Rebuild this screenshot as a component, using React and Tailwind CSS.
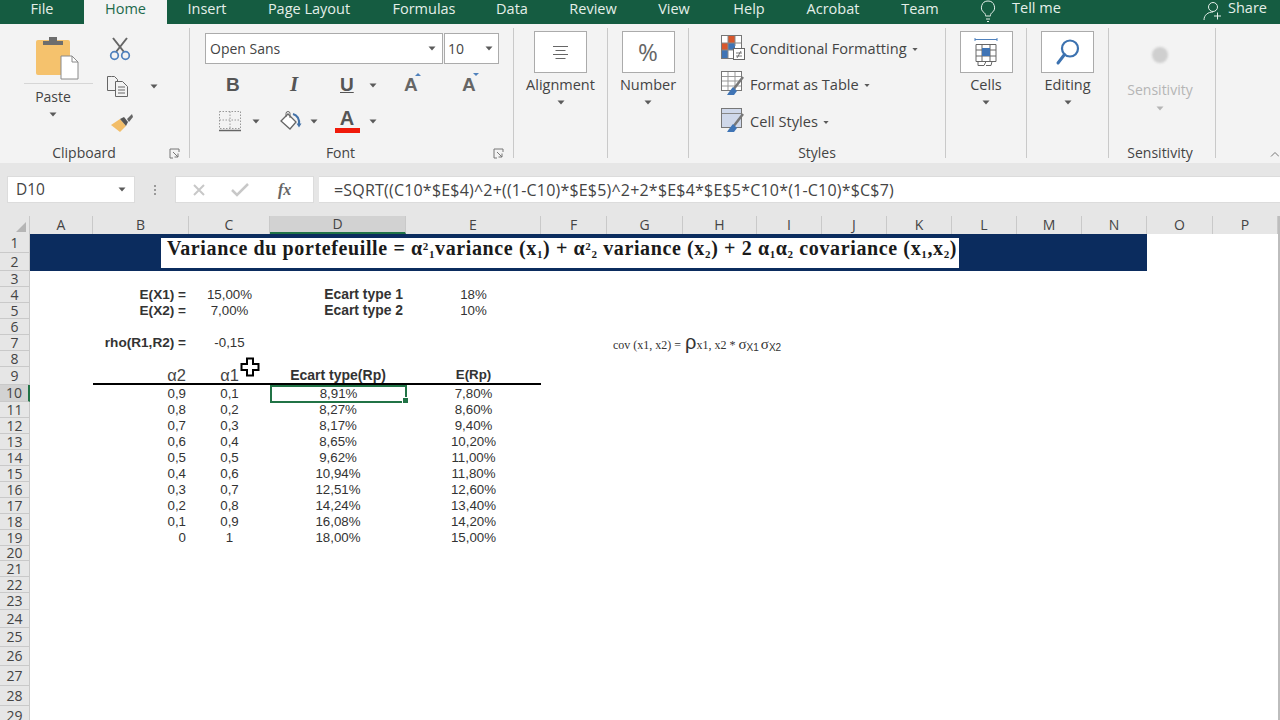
import React from "react";

const tabs = [
  ["File", "w-[84px]"],
  ["Home", "w-[83px]"],
  ["Insert", "w-[80px]"],
  ["Page Layout", "w-[124px]"],
  ["Formulas", "w-[106px]"],
  ["Data", "w-[70px]"],
  ["Review", "w-[92px]"],
  ["View", "w-[70px]"],
  ["Help", "w-[80px]"],
  ["Acrobat", "w-[88px]"],
  ["Team", "w-[86px]"],
];

const columns = [
  ["A", "w-[63px]"],
  ["B", "w-[96px]"],
  ["C", "w-[81px]"],
  ["D", "w-[136px]"],
  ["E", "w-[135px]"],
  ["F", "w-[66px]"],
  ["G", "w-[76px]"],
  ["H", "w-[74px]"],
  ["I", "w-[65px]"],
  ["J", "w-[65px]"],
  ["K", "w-[65px]"],
  ["L", "w-[65px]"],
  ["M", "w-[65px]"],
  ["N", "w-[65px]"],
  ["O", "w-[66px]"],
  ["P", "w-[65px]"],
];

const table = [
  ["0,9", "0,1", "8,91%", "7,80%"],
  ["0,8", "0,2", "8,27%", "8,60%"],
  ["0,7", "0,3", "8,17%", "9,40%"],
  ["0,6", "0,4", "8,65%", "10,20%"],
  ["0,5", "0,5", "9,62%", "11,00%"],
  ["0,4", "0,6", "10,94%", "11,80%"],
  ["0,3", "0,7", "12,51%", "12,60%"],
  ["0,2", "0,8", "14,24%", "13,40%"],
  ["0,1", "0,9", "16,08%", "14,20%"],
  ["0", "1", "18,00%", "15,00%"],
];

const Caret = ({ className = "" }) => (
  <svg width="8" height="5" viewBox="0 0 8 5" className={className}>
    <path d="M0.5 0.5h7L4 4.5z" fill="#5a5a5a" />
  </svg>
);

const Sep = () => <div className="w-px h-[130px] mt-[4px] bg-[#c9c9c9] shrink-0" />;

const Launcher = ({ className = "" }) => (
  <svg width="11" height="11" viewBox="0 0 11 11" className={className} fill="none" stroke="#777">
    <path d="M10 4V1H1v9h3" />
    <path d="M4 4l5 5M9 5.5V9H5.5" />
  </svg>
);

const GroupLabel = ({ children, launcher, pad = "" }) => (
  <div className={"relative h-[18px] mb-[1px] text-[14px] leading-[18px] text-center text-[#444] " + pad}>
    {children}
    {launcher && <Launcher className="absolute right-[9px] top-[4px]" />}
  </div>
);

const BigButton = ({ label, children }) => (
  <div className="flex-1 flex flex-col items-center">
    <div className="mt-[7px] w-[53px] h-[42px] bg-white border border-[#ababab] flex items-center justify-center">
      {children}
    </div>
    <div className="mt-[2px] text-[14.500px] leading-[20px] text-[#444]">{label}</div>
    <Caret className="mt-[5px]" />
  </div>
);

const PasteIcon = () => (
  <svg width="46" height="44" viewBox="0 0 46 44">
    <rect x="1" y="4" width="34" height="35" rx="2" fill="#f5c26d" />
    <path d="M8 9V5h6V1h8v4h6v4z" fill="#6d6d6d" />
    <path d="M26 20h11l6 6v17H26z" fill="#fff" stroke="#8a8a8a" />
    <path d="M37 20v6h6" fill="none" stroke="#8a8a8a" />
  </svg>
);

const ScissorsIcon = () => (
  <svg width="22" height="24" viewBox="0 0 22 24" fill="none">
    <path d="M4 1l11 14M18 1L7 15" stroke="#666" strokeWidth="2" />
    <circle cx="5.5" cy="18.5" r="3.8" stroke="#4f81bd" strokeWidth="1.7" />
    <circle cx="16.5" cy="18.5" r="3.8" stroke="#4f81bd" strokeWidth="1.7" />
  </svg>
);

const CopyIcon = () => (
  <svg width="23" height="22" viewBox="0 0 23 22" fill="none" stroke="#666">
    <path d="M9 15.5H1.5v-14h4M5.5 1.500h3l3 3v2" />
    <path d="M9.500 6.500h7l5 5v10h-12z" fill="#f3f3f3" />
    <path d="M12 12h7M12 15h7M12 18h7" />
  </svg>
);

const BrushIcon = () => (
  <svg width="24" height="20" viewBox="0 0 24 20">
    <path d="M1 12l9-6 6 7-6 6z" fill="#f2bd68" />
    <path d="M10 6l4-2 4 5-2 4z" fill="#555" />
    <path d="M17 6l5-5 1 3-4 5z" fill="#666" />
  </svg>
);

const BordersIcon = () => (
  <svg width="24" height="22" viewBox="0 0 24 22" fill="none">
    <path d="M1.500 1.500h21v17h-21zM12 1.500v17M1.500 10h21" stroke="#999" strokeDasharray="1.500 1.500" />
    <path d="M1 20.500h22" stroke="#666" strokeWidth="1.500" />
  </svg>
);

const FillIcon = () => (
  <svg width="23" height="20" viewBox="0 0 23 20" fill="none">
    <path d="M9 3l8 8-6 7-9-8z" fill="#fff" stroke="#666" strokeWidth="1.300" />
    <path d="M7 6V2.500a2 2 0 0 1 4 0V7" stroke="#666" />
    <path d="M14 3c4 1 7 5 6 11" stroke="#4472a8" strokeWidth="2" />
    <path d="M17.500 12.500h5l-2.500 4z" fill="#4472a8" />
  </svg>
);

const AlignIcon = () => (
  <svg width="17" height="15" viewBox="0 0 17 15" stroke="#666">
    <path d="M1 1.500h15M3.500 5.500h10M1 9.500h15M3.500 13.500h10" />
  </svg>
);

const CellsIcon = () => (
  <svg width="24" height="32" viewBox="0 0 24 32" fill="none" stroke="#666">
    <path d="M1 2v3M23 2v3M1 3.500h22" stroke="#4f81bd" />
    <path d="M2 8.500h20v17H2zM2 14h20M2 20h20M8 8.500v17M16 8.500v17" />
    <rect x="8" y="12" width="8" height="8" fill="#3f74b5" stroke="none" />
    <path d="M4 25.500v4h6l2-4M12 29.500h5l1-4" />
  </svg>
);

const SearchIcon = () => (
  <svg width="26" height="28" viewBox="0 0 26 28" fill="none" stroke="#3c72b0">
    <circle cx="15" cy="10.500" r="8" strokeWidth="2.200" />
    <path d="M9.500 16.500L3 25" strokeWidth="3" strokeLinecap="round" />
  </svg>
);

const CondIcon = () => (
  <svg width="24" height="30" viewBox="0 0 24 30" fill="none">
    <rect x="0.500" y="1.500" width="20" height="23" fill="#fff" stroke="#777" />
    <rect x="7" y="2" width="7" height="7" fill="#d9572b" />
    <rect x="1" y="9" width="6" height="7" fill="#d9572b" />
    <rect x="7" y="9" width="7" height="7" fill="#3f74b5" />
    <rect x="1" y="16" width="6" height="8" fill="#3f74b5" />
    <path d="M7 2v22M14 2v10M1 9h19M1 16h12" stroke="#888" />
    <rect x="12.500" y="14.500" width="11" height="11" fill="#fff" stroke="#666" />
    <path d="M15 19h6M15 22h6M16 24l4-7" stroke="#555" strokeWidth="0.800" />
  </svg>
);

const TableIcon = ({ shaded }) => (
  <svg width="24" height="30" viewBox="0 0 24 30" fill="none">
    <rect x="0.500" y="1.500" width="20" height="19" fill={shaded ? "#cfd8ea" : "#fff"} stroke="#777" />
    {shaded ? (
      <path d="M1 6.500h19" stroke="#888" />
    ) : (
      <path d="M1 6.500h19M1 11h19M1 16h19M7 2v18M14 2v18" stroke="#999" />
    )}
    <path d="M22 7L12 20" stroke="#777" strokeWidth="2.500" />
    <path d="M8 22l4-5 4 4-3 4H6z" fill="#3f74b5" />
  </svg>
);

const CrossCursor = () => (
  <svg width="20" height="20" viewBox="0 0 20 20">
    <path d="M7 1.500h6v5.500h5.500v6H13v5.500H7V13H1.500V7H7z" fill="#fff" stroke="#000" strokeWidth="2" />
  </svg>
);

function Ribbon() {
  return (
    <div className="flex h-[139px] bg-[#f3f3f3] text-[#444] shrink-0">
      <div className="w-[189px] flex flex-col shrink-0">
        <div className="flex-1 flex">
          <div className="w-[106px] pl-[24px] flex flex-col">
            <div className="w-[58px] h-[47px] pl-[11px] pt-[12px] border-b border-[#d6d6d6] box-content">
              <PasteIcon />
            </div>
            <div className="w-[58px] text-center text-[14px] leading-[20px] mt-[3px]">Paste</div>
            <Caret className="ml-[25px] mt-[5px]" />
          </div>
          <div className="flex flex-col pt-[13px]">
            <div className="ml-[3px]"><ScissorsIcon /></div>
            <div className="flex items-center mt-[14px] w-[52px]">
              <CopyIcon />
              <Caret className="ml-[21px]" />
            </div>
            <div className="mt-[16px] ml-[4px]">
              <BrushIcon />
            </div>
          </div>
        </div>
        <GroupLabel launcher pad="pr-[21px]">Clipboard</GroupLabel>
      </div>
      <Sep />
      <div className="w-[323px] flex flex-col shrink-0">
        <div className="flex-1 pl-[15px] pt-[9px]">
          <div className="flex h-[31px]">
            <div className="w-[238px] bg-white border border-[#ababab] flex items-center justify-between pl-[4px] pr-[6px] text-[14px]">
              Open Sans
              <Caret />
            </div>
            <div className="w-[55px] ml-px bg-white border border-[#ababab] flex items-center justify-between pl-[3px] pr-[5px] text-[14px]">
              10
              <Caret />
            </div>
          </div>
          <div className="flex items-center h-[36px] mt-[3px] text-[#555]">
            <span className="ml-[21px] w-[24px] text-[19px] font-bold font-['Liberation_Sans',sans-serif]">B</span>
            <span className="ml-[40px] w-[24px] text-[21px] font-bold italic font-['Liberation_Serif',serif]">I</span>
            <span className="ml-[26px] w-[22px] text-[19px] font-bold font-['Liberation_Sans',sans-serif] underline">U</span>
            <Caret className="ml-[7px]" />
            <span className="ml-[27px] w-[20px] text-[19px] font-bold font-['Liberation_Sans',sans-serif] relative text-[#666]">
              A
              <span className="absolute left-[11px] top-[2px] w-0 h-0 border-x-[3px] border-x-transparent border-b-[3px] border-b-[#4f81bd]" />
            </span>
            <span className="ml-[38px] w-[20px] text-[19px] font-bold font-['Liberation_Sans',sans-serif] relative text-[#666]">
              A
              <span className="absolute left-[11px] top-[2px] w-0 h-0 border-x-[3px] border-x-transparent border-t-[3px] border-t-[#4f81bd]" />
            </span>
          </div>
          <div className="flex items-center h-[32px] mt-[2px]">
            <div className="ml-[13px]"><BordersIcon /></div>
            <Caret className="ml-[10px]" />
            <div className="ml-[19px]"><FillIcon /></div>
            <Caret className="ml-[8px]" />
            <div className="ml-[16px] w-[26px] flex flex-col items-center">
              <span className="text-[20px] leading-[18px] font-bold font-['Liberation_Sans',sans-serif] text-[#555]">A</span>
              <span className="w-[25px] h-[5px] bg-[#f01a0a] mt-[1px]" />
            </div>
            <Caret className="ml-[9px]" />
          </div>
        </div>
        <GroupLabel launcher pad="pr-[22px]">Font</GroupLabel>
      </div>
      <Sep />
      <div className="w-[93px] flex flex-col shrink-0">
        <BigButton label="Alignment"><AlignIcon /></BigButton>
      </div>
      <Sep />
      <div className="w-[80px] flex flex-col shrink-0">
        <BigButton label="Number"><span className="text-[24px] leading-none text-[#666]">%</span></BigButton>
      </div>
      <Sep />
      <div className="w-[256px] flex flex-col shrink-0">
        <div className="flex-1 pl-[32px] pt-[10px] text-[14.600px]">
          <div className="flex items-center h-[30px] gap-[5px]">
            <CondIcon />
            <span>Conditional Formatting</span>
            <Caret className="scale-75 -ml-[1px]" />
          </div>
          <div className="flex items-center h-[30px] mt-[6px] gap-[5px]">
            <TableIcon />
            <span>Format as Table</span>
            <Caret className="scale-75 -ml-[1px]" />
          </div>
          <div className="flex items-center h-[30px] mt-[7px] gap-[5px]">
            <TableIcon shaded />
            <span>Cell Styles</span>
            <Caret className="scale-75 -ml-[1px]" />
          </div>
        </div>
        <GroupLabel>Styles</GroupLabel>
      </div>
      <Sep />
      <div className="w-[80px] flex flex-col shrink-0">
        <BigButton label="Cells"><CellsIcon /></BigButton>
      </div>
      <Sep />
      <div className="w-[81px] flex flex-col shrink-0">
        <BigButton label="Editing"><SearchIcon /></BigButton>
      </div>
      <Sep />
      <div className="w-[106px] flex flex-col shrink-0">
        <div className="flex-1 flex flex-col items-center pr-[4px]">
          <div className="mt-[23px] w-[16px] h-[16px] rounded-full bg-[#cfcfcf] blur-[1px]" />
          <div className="mt-[17px] text-[14px] leading-[20px] text-[#b5b5b5]">Sensitivity</div>
          <Caret className="mt-[6px] opacity-40" />
        </div>
        <GroupLabel pad="pr-[4px]">Sensitivity</GroupLabel>
      </div>
      <Sep />
      <div className="flex-1 flex items-end justify-end pb-[6px] pr-[1px]">
        <svg width="9" height="6" viewBox="0 0 9 6" fill="none" stroke="#777">
          <path d="M1 5.500L5 1.500l4 4" />
        </svg>
      </div>
    </div>
  );
}

function FormulaBar() {
  return (
    <div className="h-[53px] bg-[#e6e6e6] shrink-0 flex pt-[13px] text-[#444]">
      <div className="ml-[7px] w-[128px] h-[27px] bg-white flex items-center justify-between pl-[8px] pr-[8px] border border-[#dcdcdc] text-[15.500px]">
        D10
        <Caret />
      </div>
      <div className="w-[40px] h-[27px] flex flex-col items-center justify-center gap-[2px]">
        <span className="w-[2px] h-[2px] bg-[#999]" />
        <span className="w-[2px] h-[2px] bg-[#999]" />
        <span className="w-[2px] h-[2px] bg-[#999]" />
      </div>
      <div className="w-[139px] h-[27px] bg-white border border-[#dcdcdc] flex items-center">
        <svg width="14" height="12" viewBox="0 0 14 12" className="ml-[16px]" stroke="#c8c8c8" strokeWidth="2">
          <path d="M2 1l10 10M12 1L2 11" />
        </svg>
        <svg width="18" height="14" viewBox="0 0 18 14" className="ml-[25px]" fill="none" stroke="#c8c8c8" strokeWidth="2.500">
          <path d="M1 7l5 5L17 1" />
        </svg>
        <span className="ml-[29px] text-[16px] italic font-bold font-['Liberation_Serif',serif] text-[#666]">fx</span>
      </div>
      <div className="ml-[5px] flex-1 h-[27px] bg-white border-y border-[#dcdcdc] flex items-center pl-[15px] whitespace-nowrap text-[16px] tracking-[0.2px]">
        =SQRT((C10*$E$4)^2+((1-C10)*$E$5)^2+2*$E$4*$E$5*C10*(1-C10)*$C$7)
      </div>
    </div>
  );
}

const RowHead = ({ n, active }) => (
  <div
    className={
      "w-[30px] shrink-0 flex items-center justify-center border-b border-[#c9c9c9] font-['Open_Sans',sans-serif] text-[14px] text-[#444] " +
      (active ? "bg-[#d2d2d2] border-r-2 border-r-[#217346]" : "bg-[#e6e6e6] border-r border-r-[#c9c9c9]")
    }
  >
    {n}
  </div>
);

const Row = ({ n, h, active, b, c, d, e, rule, big, bold, side }) => (
  <div className={"flex " + h}>
    <RowHead n={n} active={active} />
    <div className="w-[63px] shrink-0" />
    <div className={"w-[96px] shrink-0 flex items-center justify-end pr-[3px] whitespace-nowrap " + (rule ? "border-b-2 border-black " : "") + (big ? "text-[16.500px] text-[#444] " : "") + (bold ? "font-bold text-[13.600px]" : "")}>{b}</div>
    <div className={"w-[81px] shrink-0 flex items-center justify-center " + (rule ? "border-b-2 border-black " : "") + (big ? "text-[16.500px] text-[#444]" : "")}>{c}</div>
    <div className={"w-[136px] shrink-0 flex items-center whitespace-nowrap " + (side ? "justify-end pr-[3px] font-bold text-[13.900px] " : "justify-center ") + (rule ? "border-b-2 border-black font-bold text-[14px] " : "") + (active ? "relative border-2 border-[#217346] h-[18px] w-[137px] -mr-px z-10" : "")}>
      {d}
      {active && <span className="absolute -right-[4px] -bottom-[3px] w-[7px] h-[7px] bg-[#217346] border border-white" />}
    </div>
    <div className={"w-[135px] shrink-0 flex items-center justify-center " + (rule ? "border-b-2 border-black font-bold" : "")}>{e}</div>
  </div>
);

const tailRows = [
  [20, "h-[15px]"],
  [21, "h-[16px]"],
  [22, "h-[16px]"],
  [23, "h-[17px]"],
  [24, "h-[18px]"],
  [25, "h-[19px]"],
  [26, "h-[19px]"],
  [27, "h-[20px]"],
  [28, "h-[20px]"],
  [29, "h-[20px]"],
];

const subCls = "text-[11px] font-bold";

function Sheet() {
  return (
    <div className="relative flex-1 bg-white overflow-hidden border-r-2 border-r-[#bdbdbd] font-['Liberation_Sans',sans-serif] text-[13.300px] leading-none text-[#333]">
      <div className="flex h-[18px] bg-[#e6e6e6] font-['Open_Sans',sans-serif] text-[14px] text-[#444]">
        <div className="w-[30px] shrink-0 relative border-r border-[#c9c9c9]">
          <span className="absolute right-[3px] bottom-[2px] w-0 h-0 border-l-[10px] border-l-transparent border-b-[10px] border-b-[#b5b5b5]" />
        </div>
        {columns.map(([l, w]) => (
          <div
            key={l}
            className={w + " shrink-0 flex items-center justify-center border-r border-[#c9c9c9] " + (l === "D" ? "bg-[#d2d2d2] border-b-2 border-b-[#217346]" : "")}
          >
            {l}
          </div>
        ))}
      </div>

      <div className="flex h-[37px]">
        <div className="w-[30px] shrink-0 flex flex-col bg-[#e6e6e6]">
          <div className="h-[19px] flex items-center justify-center border-b border-r border-[#c9c9c9] font-['Open_Sans',sans-serif] text-[14px] text-[#444]">1</div>
          <div className="h-[18px] flex items-center justify-center border-b border-r border-[#c9c9c9] font-['Open_Sans',sans-serif] text-[14px] text-[#444]">2</div>
        </div>
        <div className="w-[1117px] shrink-0 bg-[#0b2c5e] pl-[131px] pt-[4px]">
          <div className="w-[798px] h-[30px] bg-white pl-[6px] font-['Liberation_Serif',serif] font-bold text-[20px] leading-[20px] text-[#1a1a1a] whitespace-nowrap tracking-[0.62px]">
            Variance du portefeuille = α<sup className={subCls}>2</sup><sub className={subCls}>1</sub>variance (x<sub className={subCls}>1</sub>) + α<sup className={subCls}>2</sup><sub className={subCls}>2</sub> variance (x<sub className={subCls}>2</sub>) + 2 α<sub className={subCls}>1</sub>α<sub className={subCls}>2</sub> covariance (x<sub className={subCls}>1</sub>,x<sub className={subCls}>2</sub>)
          </div>
        </div>
      </div>

      <Row n={3} h="h-[16px]" />
      <Row n={4} h="h-[16px]" bold side b="E(X1) =" c="15,00%" d="Ecart type 1" e="18%" />
      <Row n={5} h="h-[16px]" bold side b="E(X2) =" c="7,00%" d="Ecart type 2" e="10%" />
      <Row n={6} h="h-[16px]" />
      <Row n={7} h="h-[16px]" bold b="rho(R1,R2) =" c="-0,15" />
      <Row n={8} h="h-[16px]" />
      <Row n={9} h="h-[18px]" rule big b="α2" c="α1" d="Ecart type(Rp)" e="E(Rp)" />
      {table.map((r, i) => (
        <Row key={i} n={i + 10} h={i === 0 ? "h-[17px]" : "h-[16px]"} active={i === 0} b={r[0]} c={r[1]} d={r[2]} e={r[3]} />
      ))}
      {tailRows.map(([n, h]) => (
        <Row key={n} n={n} h={h} />
      ))}

      <div className="absolute left-[613px] top-[116px] flex items-baseline whitespace-nowrap font-['Liberation_Serif',serif] text-[12px] leading-[20px] text-[#333]">
        cov (x1, x2) =<span className="ml-[4px] text-[20px] font-['Liberation_Sans',sans-serif]">ρ</span>
        <span className="text-[12px]">x1, x2</span>
        <span className="ml-[3px]">*</span>
        <span className="ml-[3px] text-[15px]">σ</span>
        <span className="text-[10px] translate-y-[2px] font-['Liberation_Sans',sans-serif]">X1</span>
        <span className="ml-[2px] text-[15px]">σ</span>
        <span className="text-[10px] translate-y-[2px] font-['Liberation_Sans',sans-serif]">X2</span>
      </div>

      <div className="absolute left-[240px] top-[141px]">
        <CrossCursor />
      </div>
    </div>
  );
}

export default function App() {
  return (
    <div className="w-[1280px] h-[720px] overflow-hidden flex flex-col font-['Open_Sans',sans-serif]">
      <div className="h-[24px] bg-[#155c41] flex text-[14.500px] leading-[15px] text-white shrink-0">
        {tabs.map(([t, w]) => (
          <div
            key={t}
            className={w + " h-[24px] pb-[8px] flex items-center justify-center " + (t === "Home" ? "bg-[#f3f3f3] text-[#1d6a4c]" : "text-[#e4efe9]")}
          >
            {t}
          </div>
        ))}
        <svg width="18" height="22" viewBox="0 0 18 22" className="ml-[16px]" fill="none" stroke="#e4efe9">
          <path d="M9 1a6.500 6.500 0 0 0-3.500 12c1 1 1 2 1 3h5c0-1 0-2 1-3A6.500 6.500 0 0 0 9 1zM7 19h4M8 21.500h2" />
        </svg>
        <div className="ml-[15px] h-[24px] pb-[9px] flex items-center text-[#e4efe9]">Tell me</div>
        <div className="flex-1" />
        <svg width="20" height="20" viewBox="0 0 20 20" className="mt-[1px]" fill="none" stroke="#e4efe9">
          <circle cx="10" cy="6" r="4.500" />
          <path d="M1 19c0-5 4-8 9-8M11 15h7M14.500 11.500v7" />
        </svg>
        <div className="ml-[5px] mr-[13px] h-[24px] pb-[9px] flex items-center text-[#e4efe9]">Share</div>
      </div>
      <Ribbon />
      <FormulaBar />
      <Sheet />
    </div>
  );
}
